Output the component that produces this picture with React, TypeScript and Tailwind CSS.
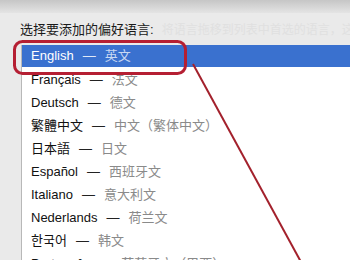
import React from "react";

const rows: [string, string][] = [
  ["English", "英文"],
  ["Français", "法文"],
  ["Deutsch", "德文"],
  ["繁體中文", "中文（繁体中文）"],
  ["日本語", "日文"],
  ["Español", "西班牙文"],
  ["Italiano", "意大利文"],
  ["Nederlands", "荷兰文"],
  ["한국어", "韩文"],
  ["Português", "葡萄牙文（巴西）"],
];

export default function App() {
  return (
    <div
      className="relative w-[350px] h-[260px] overflow-hidden bg-[#eaeaea] text-[13px]"
      style={{ fontFamily: '"Liberation Sans", "Noto Sans CJK SC", "Noto Sans CJK KR", sans-serif' }}
    >
      <div className="h-[13px] bg-gradient-to-b from-[#c6c6c6] to-[#e4e4e4]" />
      <div className="flex items-center h-[32px] pl-[20px] pt-[2px] whitespace-nowrap overflow-hidden">
        <span className="shrink-0 text-[#1a1a1a]">选择要添加的偏好语言:</span>
        <span className="shrink-0 ml-[8px] text-[#e0e0e0] text-[12px]">将语言拖移到列表中首选的语言，这会影</span>
      </div>
      <div className="ml-[21px] bg-white border-l border-[#b8b8b8] h-full">
        {rows.map(([name, tr], i) => (
          <div
            key={name}
            className={
              i === 0
                ? "flex items-center h-[22px] mb-[1px] pl-[9px] bg-[#3a71cf] text-white whitespace-nowrap"
                : "flex items-center h-[23px] pl-[9px] text-[#111] whitespace-nowrap"
            }
          >
            <span>{name}</span>
            <span className={i === 0 ? "ml-[9px] text-[#dfe8f7]" : "ml-[9px] text-[#222]"}>—</span>
            <span className={i === 0 ? "ml-[9px] text-[#c9d8f2]" : "ml-[9px] text-[#8a8a8a]"}>{tr}</span>
          </div>
        ))}
      </div>
      <svg className="absolute left-0 top-0" width="350" height="260" viewBox="0 0 350 260">
        <rect x="14.5" y="41.5" width="171" height="32" rx="8" ry="8" fill="none" stroke="#b51f33" strokeWidth="3" />
        <line x1="193" y1="64" x2="301" y2="262" stroke="#a3212c" strokeWidth="2" />
      </svg>
    </div>
  );
}
